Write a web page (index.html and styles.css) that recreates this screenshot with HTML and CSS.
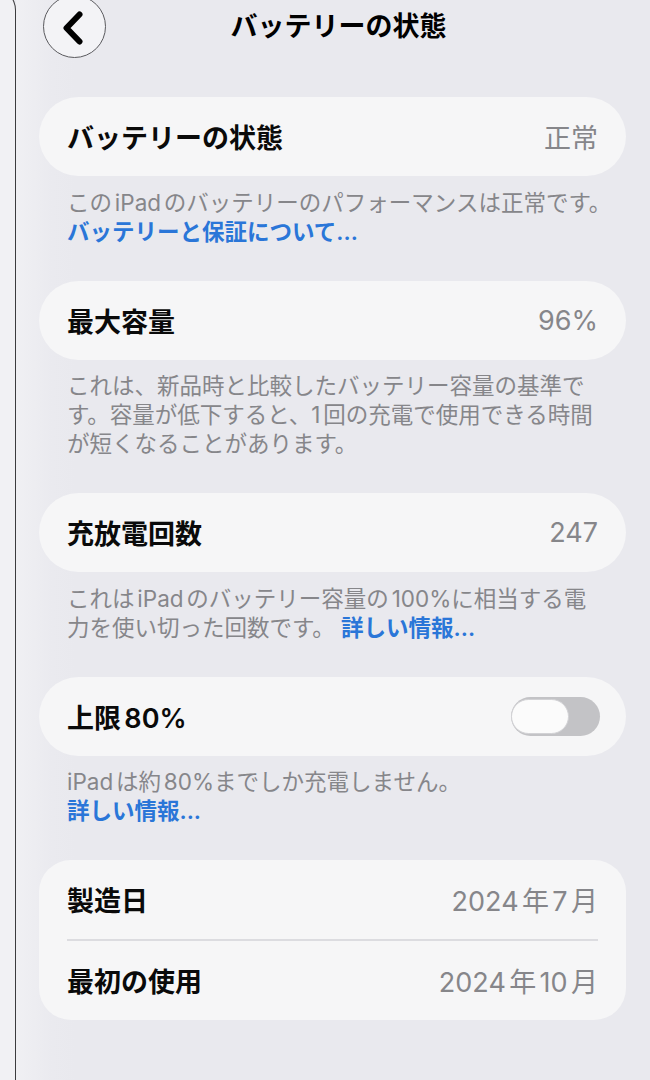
FILE: index.html
```html
<!DOCTYPE html>
<html lang="ja">
<head>
<meta charset="utf-8">
<title>バッテリーの状態</title>
<link rel="stylesheet" href="styles.css">
</head>
<body>
<div class="screen">
  <div class="sidebar-edge"></div>
  <main class="main">
    <header class="nav">
      <button class="back" aria-label="戻る">
        <svg width="22" height="34" viewBox="0 0 22 34"><path d="M17.5 3.5 L4.5 17 L17.5 30.5" fill="none" stroke="#000" stroke-width="6" stroke-linecap="round" stroke-linejoin="round"/></svg>
      </button>
      <h1 class="title">バッテリーの状態</h1>
      <span class="nav-spacer"></span>
    </header>

    <section class="group">
      <div class="card">
        <div class="row"><span class="label">バッテリーの状態</span><span class="value">正常</span></div>
      </div>
      <p class="footer">このiPadのバッテリーのパフォーマンスは正常です。<br><a class="link">バッテリーと保証について...</a></p>
    </section>

    <section class="group">
      <div class="card">
        <div class="row"><span class="label">最大容量</span><span class="value">96%</span></div>
      </div>
      <p class="footer">これは、新品時と比較したバッテリー容量の基準で<br>す。容量が低下すると、1回の充電で使用できる時間<br>が短くなることがあります。</p>
    </section>

    <section class="group">
      <div class="card">
        <div class="row"><span class="label">充放電回数</span><span class="value">247</span></div>
      </div>
      <p class="footer">これはiPadのバッテリー容量の100%に相当する電<br>力を使い切った回数です。 <a class="link">詳しい情報...</a></p>
    </section>

    <section class="group">
      <div class="card">
        <div class="row"><span class="label">上限80%</span><span class="switch"><span class="knob"></span></span></div>
      </div>
      <p class="footer">iPadは約80%までしか充電しません。<br><a class="link">詳しい情報...</a></p>
    </section>

    <section class="group">
      <div class="card card-multi">
        <div class="row"><span class="label">製造日</span><span class="value">2024年7月</span></div>
        <div class="sep"></div>
        <div class="row"><span class="label">最初の使用</span><span class="value">2024年10月</span></div>
      </div>
    </section>
  </main>
</div>
</body>
</html>
```

FILE: styles.css
```css
html, body {
  margin: 0;
  padding: 0;
}
body {
  width: 650px;
  height: 1080px;
  overflow: hidden;
  background: #e9e9ee;
  font-family: Inter, "Noto Sans CJK JP", sans-serif;
  text-autospace: normal;
}
.screen {
  display: flex;
  height: 1080px;
}
.sidebar-edge {
  flex: 0 0 auto;
  width: 22px;
  height: 1100px;
  margin-top: -12px;
  margin-left: -6px;
  background: #f1f1f4;
  border-right: 1.5px solid #3c3c3e;
  border-top: 1.5px solid #3c3c3e;
  border-top-right-radius: 34px;
  box-sizing: border-box;
}
.main {
  flex: 1;
  min-width: 0;
  background: linear-gradient(to right, #f0f0f3 0px, #eaeaef 36px, #e9e9ee 60px);
  padding: 0 24px 0 23px;
}
.nav {
  display: grid;
  grid-template-columns: 1fr auto 1fr;
  grid-template-rows: 54px;
  align-items: center;
  height: 54px;
  margin-bottom: 43px;
}
.back {
  justify-self: start;
  align-self: center;
  width: 63px;
  height: 63px;
  margin: -5px 0 -4px 4px;
  border-radius: 50%;
  border: 1.2px solid #5a5a5e;
  background: #f3f3f6;
  display: flex;
  align-items: center;
  justify-content: center;
  padding: 0 4px 0 0;
  box-sizing: border-box;
}
.back svg {
  display: block;
  margin-top: 2px;
}
.title {
  margin: 0;
  padding-left: 12px;
  font-size: 27px;
  line-height: 54px;
  font-weight: 700;
  color: #000;
  white-space: nowrap;
}
.group {
  margin-bottom: 35px;
}
.card {
  background: #f6f6f7;
  border-radius: 40px;
  padding: 0 28px;
}
.card-multi {
  border-radius: 32px;
}
.row {
  height: 79px;
  display: flex;
  align-items: center;
  justify-content: space-between;
}
.label {
  font-size: 27px;
  font-weight: 600;
  color: #0a0a0a;
  white-space: nowrap;
}
.value {
  font-size: 27px;
  font-weight: 400;
  color: #86868a;
  white-space: nowrap;
}
.sep {
  height: 1.5px;
  background: #dcdce0;
}
.footer {
  margin: 0;
  padding: 11.5px 28px 0;
  font-size: 22.5px;
  line-height: 29px;
  color: #86868a;
  white-space: nowrap;
}
.link {
  color: #2a76d8;
  font-weight: 600;
}
.switch {
  display: flex;
  align-items: center;
  width: 89px;
  height: 39px;
  border-radius: 20px;
  background: #c3c3c6;
  padding: 2px;
  box-sizing: border-box;
  margin-right: -2px;
}
.knob {
  width: 58px;
  height: 35px;
  border-radius: 18px;
  background: #fbfbfb;
  box-sizing: border-box;
  border: 1px solid #d2d2d5;
  margin-left: -2px;
}
```
